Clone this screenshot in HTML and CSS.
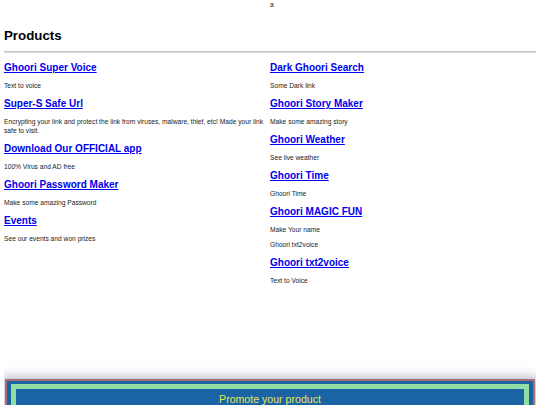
FILE: index.html
```html
<!DOCTYPE html>
<html lang="en">
<head>
<meta charset="utf-8">
<title>Products</title>
<link rel="stylesheet" href="styles.css">
</head>
<body>
<div class="topbar"><span></span><span class="mark">a</span></div>
<h2 class="title">Products</h2>
<div class="rule"></div>
<div class="grid">
  <div class="col">
    <h3 class="item"><a href="#">Ghoori Super Voice</a></h3>
    <p class="desc">Text to voice</p>
    <h3 class="item"><a href="#">Super-S Safe Url</a></h3>
    <p class="desc">Encrypting your link and protect the link from viruses, malware, thief, etc! Made your link safe to visit.</p>
    <h3 class="item"><a href="#">Download Our OFFICIAL app</a></h3>
    <p class="desc">100% Virus and AD free</p>
    <h3 class="item"><a href="#">Ghoori Password Maker</a></h3>
    <p class="desc">Make some amazing Password</p>
    <h3 class="item"><a href="#">Events</a></h3>
    <p class="desc">See our events and won prizes</p>
  </div>
  <div class="col">
    <h3 class="item"><a href="#">Dark Ghoori Search</a></h3>
    <p class="desc">Some Dark link</p>
    <h3 class="item"><a href="#">Ghoori Story Maker</a></h3>
    <p class="desc">Make some amazing story</p>
    <h3 class="item"><a href="#">Ghoori Weather</a></h3>
    <p class="desc">See live weather</p>
    <h3 class="item"><a href="#">Ghoori Time</a></h3>
    <p class="desc">Ghoori Time</p>
    <h3 class="item"><a href="#">Ghoori MAGIC FUN</a></h3>
    <p class="desc">Make Your name</p>
    <p class="desc">Ghoori txt2voice</p>
    <h3 class="item"><a href="#">Ghoori txt2voice</a></h3>
    <p class="desc">Text to Voice</p>
  </div>
</div>
<div class="promo">
  <div class="promo-inner">Promote your product</div>
</div>
</body>
</html>
```
FILE: styles.css
```css
html, body {
  background: #ffffff;
}
body {
  margin: 0 4px;
  font-family: "Liberation Sans", Arial, sans-serif;
  color: #222222;
}
.topbar {
  display: grid;
  grid-template-columns: 1fr 1fr;
  font-size: 6.66px;
  line-height: 9px;
  height: 9px;
}
.title {
  font-size: 13.3px;
  line-height: 15px;
  font-weight: bold;
  margin: 18.5px 0 8.5px;
  color: #000000;
}
.rule {
  height: 1px;
  border-top: 1px solid #c4c4c4;
  background: #dcdcdc;
}
.grid {
  display: grid;
  grid-template-columns: 1fr 1fr;
  margin-top: 1.35px;
}
.item {
  font-size: 10px;
  line-height: 11.5px;
  font-weight: bold;
  margin: 7.75px 0;
}
.item a {
  color: #0000ee;
  text-decoration: underline;
}
.desc {
  font-size: 6.66px;
  line-height: 9px;
  margin: 6px 0;
  color: #222222;
}
.promo {
  margin: 87.6px 1px 0;
  border: 2px solid #a86e70;
  background: #1a63a4;
  padding: 3px 4px 0;
  box-shadow: 0 0 9px 3px rgba(70, 70, 120, 0.35);
}
.promo-inner {
  border: 5px solid #92dca6;
  border-bottom: none;
  background: #1a63a4;
  color: #e4e65a;
  text-align: center;
  font-size: 10.6px;
  line-height: 12px;
  padding: 4px 0 8px;
}
```
